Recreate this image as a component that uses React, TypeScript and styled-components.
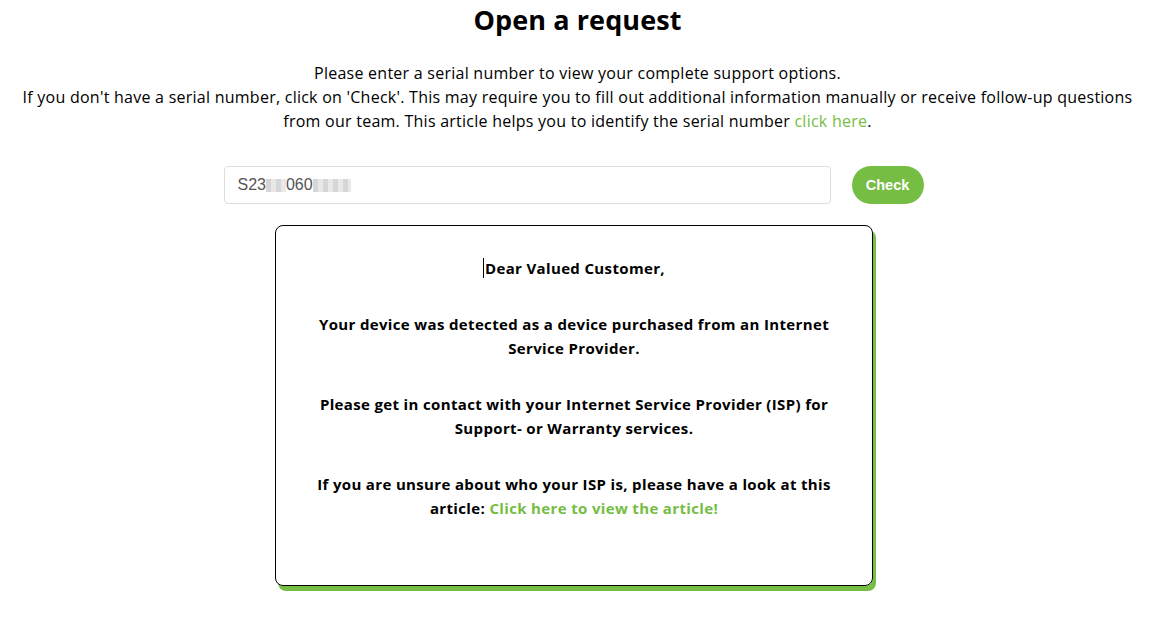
import React from "react";
import styled, { createGlobalStyle } from "styled-components";

const GREEN = "#76bd43";

const Global = createGlobalStyle`
  html, body { margin: 0; padding: 0; background: #fff; }
  body { font-family: "Open Sans", "Noto Sans", sans-serif; color: #000; }
`;

const Page = styled.div`
  display: flex;
  flex-direction: column;
  align-items: center;
  padding: 0 15px 36px;
  min-height: 621px;
  box-sizing: border-box;
`;

const Title = styled.h1`
  margin: 3px 0 0;
  font-size: 27px;
  line-height: 34px;
  font-weight: 700;
  letter-spacing: 0.1px;
`;

const Intro = styled.p`
  margin: 24px 0 0;
  font-size: 16px;
  line-height: 24px;
  letter-spacing: 0.25px;
  text-align: center;
`;

const Link = styled.a`
  color: ${GREEN};
  text-decoration: none;
  cursor: pointer;
`;

const SearchRow = styled.div`
  display: flex;
  align-items: center;
  gap: 21px;
  margin-top: 33px;
  margin-left: -8px;
`;

const InputBox = styled.div`
  width: 592px;
  height: 36px;
  border: 1px solid #dedede;
  border-radius: 4px;
  display: flex;
  align-items: center;
  padding-left: 13px;
  font-family: "Liberation Sans", Arial, sans-serif;
  font-size: 16px;
  color: #555;
`;

const Blur = styled.span<{ $w: number }>`
  display: inline-block;
  width: ${(p) => p.$w}px;
  height: 13px;
  background:
    repeating-linear-gradient(90deg, #d6d6d6 0 5px, #e8e8e8 5px 10px);
`;

const CheckButton = styled.button`
  height: 38px;
  width: 72px;
  padding: 0;
  border: none;
  border-radius: 19px;
  background: ${GREEN};
  color: #fff;
  font-family: "Liberation Sans", Arial, sans-serif;
  font-weight: 700;
  font-size: 14.5px;
  cursor: pointer;
`;

const Card = styled.div`
  margin-top: 21px;
  margin-left: -7px;
  width: 518px;
  padding: 30px 39px 65px;
  border: 1.5px solid #000;
  border-radius: 8px;
  box-shadow: 3px 5px 0 ${GREEN};
  text-align: center;
  font-size: 15px;
  font-weight: 700;
  line-height: 24px;
  letter-spacing: 0.35px;
`;

const CardPara = styled.p`
  margin: 0 0 32px;
  &:last-child { margin-bottom: 0; }
`;

const Caret = styled.span`
  display: inline-block;
  width: 1px;
  height: 20px;
  margin-right: 1px;
  background: #000;
  vertical-align: -4px;
`;

export default function App() {
  return (
    <>
      <Global />
      <Page>
        <Title>Open a request</Title>
        <Intro>
          Please enter a serial number to view your complete support options.
          <br />
          If you don't have a serial number, click on 'Check'. This may require you to fill out additional
          information manually or receive follow-up questions from our team. This article helps you to
          identify the serial number <Link>click here</Link>.
        </Intro>
        <SearchRow>
          <InputBox>
            S23<Blur $w={20} />060<Blur $w={38} />
          </InputBox>
          <CheckButton>Check</CheckButton>
        </SearchRow>
        <Card>
          <CardPara>
            <Caret />Dear Valued Customer,
          </CardPara>
          <CardPara>Your device was detected as a device purchased from an Internet Service Provider.</CardPara>
          <CardPara>
            Please get in contact with your Internet Service Provider (ISP) for Support- or Warranty services.
          </CardPara>
          <CardPara>
            If you are unsure about who your ISP is, please have a look at this article:{" "}
            <Link>Click here to view the article!</Link>
          </CardPara>
        </Card>
      </Page>
    </>
  );
}
